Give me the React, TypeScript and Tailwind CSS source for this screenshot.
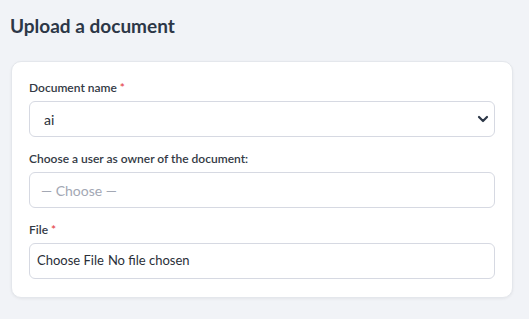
import React from 'react'

const font = { fontFamily: 'Lato, "Noto Sans", Arial, sans-serif' }

const Label = ({ text, required }: { text: string; required?: boolean }) => (
  <label className="block text-[12px] leading-[16px] font-semibold text-[#333a45] mb-[5px]">
    {text}
    {required && <span className="text-[#e5484d] ml-[3px]">*</span>}
  </label>
)

export default function App() {
  return (
    <div className="min-h-screen w-full bg-[#f1f3f7] pl-[11px] pr-[16px] pt-[13px]" style={font}>
      <h1 className="text-[19px] leading-[26px] font-bold text-[#2c3747] -ml-[1px]">Upload a document</h1>

      <div className="mt-[22px] bg-white rounded-[10px] border border-[#e4e7ec] shadow-[0_1px_3px_rgba(0,0,0,0.06)] px-[17px] pt-[18px] pb-[18px]">
        <div>
          <Label text="Document name" required />
          <div className="relative">
            <select
              defaultValue="ai"
              className="appearance-none w-full h-[36px] rounded-[6px] border border-[#d6d9e2] bg-white pl-[14px] pr-8 text-[14px] text-[#2a2f38] outline-none"
            >
              <option value="ai">ai</option>
            </select>
            <svg
              className="absolute right-[6px] top-[13px] pointer-events-none"
              width="12"
              height="10"
              viewBox="0 0 12 10"
              fill="none"
            >
              <path d="M2 3l4 4 4-4" stroke="#2c3747" strokeWidth="2.2" strokeLinecap="round" strokeLinejoin="round" />
            </svg>
          </div>
        </div>

        <div className="mt-[14px]">
          <Label text="Choose a user as owner of the document:" />
          <div className="w-full h-[36px] rounded-[6px] border border-[#d6d9e2] bg-white pl-[11px] flex items-center text-[14px] text-[#a3a8b4]">
            — Choose —
          </div>
        </div>

        <div className="mt-[14px]">
          <Label text="File" required />
          <div className="w-full h-[36px] rounded-[6px] border border-[#d6d9e2] bg-white pl-[7px] flex items-center text-[13px] text-[#2a2f38]">
            <span>Choose File</span>
            <span className="ml-[4px]">No file chosen</span>
          </div>
        </div>
      </div>
    </div>
  )
}
